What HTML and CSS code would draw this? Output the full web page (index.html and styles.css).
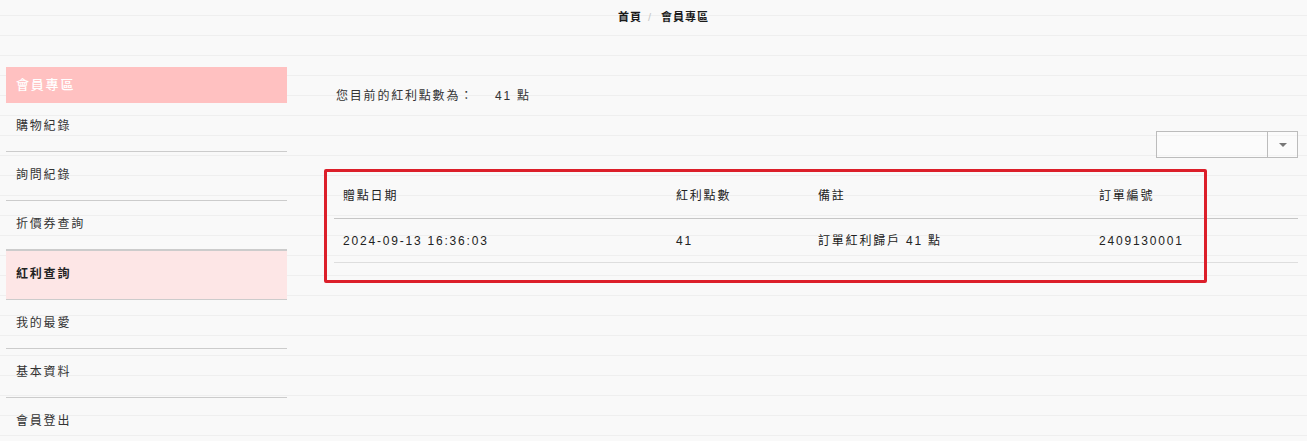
FILE: index.html
```html
<!DOCTYPE html>
<html lang="zh-Hant">
<head>
<meta charset="utf-8">
<title>會員專區 - 紅利查詢</title>
<link rel="stylesheet" href="styles.css">
</head>
<body>
<nav class="breadcrumb">
  <a class="crumb" href="#">首頁</a>
  <span class="sep">/</span>
  <span class="crumb">會員專區</span>
</nav>
<div class="page">
  <aside class="sidebar">
    <div class="side-title">會員專區</div>
    <ul class="side-menu">
      <li class="side-item">購物紀錄</li>
      <li class="side-item">詢問紀錄</li>
      <li class="side-item">折價券查詢</li>
      <li class="side-item active">紅利查詢</li>
      <li class="side-item">我的最愛</li>
      <li class="side-item">基本資料</li>
      <li class="side-item">會員登出</li>
    </ul>
  </aside>
  <main class="main">
    <p class="points">您目前的紅利點數為：<span class="points-value">41 點</span></p>
    <div class="filter-row">
      <div class="select">
        <span class="select-value"></span>
        <span class="select-arrow"><span class="caret"></span></span>
      </div>
    </div>
    <table class="records">
      <thead>
        <tr>
          <th class="col-date">贈點日期</th>
          <th class="col-points">紅利點數</th>
          <th class="col-note">備註</th>
          <th class="col-order">訂單編號</th>
        </tr>
      </thead>
      <tbody>
        <tr>
          <td>2024-09-13 16:36:03</td>
          <td>41</td>
          <td>訂單紅利歸戶 41 點</td>
          <td>2409130001</td>
        </tr>
      </tbody>
    </table>
    <div class="highlight"></div>
  </main>
</div>
</body>
</html>
```

FILE: styles.css
```css
html, body {
  margin: 0;
  padding: 0;
}

body {
  font-family: "Liberation Sans", "Noto Sans CJK TC", sans-serif;
  font-size: 12px;
  color: #333;
  background-color: #f9f9f9;
  background-image: repeating-linear-gradient(
    to bottom,
    transparent 0,
    transparent 19px,
    #efefef 19px,
    #efefef 20px
  );
  background-position: 0 -4px;
  height: 441px;
  overflow: hidden;
}

.breadcrumb {
  display: flex;
  justify-content: center;
  align-items: center;
  height: 18px;
  padding: 8px 0 0 20px;
  font-size: 11px;
  letter-spacing: 1px;
  line-height: 18px;
}

.crumb {
  color: #1a1a1a;
  font-weight: 600;
  text-decoration: none;
}

.sep {
  color: #c8c8c8;
  padding: 0 9px 0 6px;
}

.page {
  display: grid;
  grid-template-columns: 281px 1fr;
  column-gap: 47px;
  padding: 0 9px 0 6px;
  margin-top: 41px;
}

.sidebar {
  display: flex;
  flex-direction: column;
}

.side-title {
  height: 36px;
  line-height: 36px;
  background: #ffc1c1;
  color: #fff;
  font-size: 13px;
  font-weight: 500;
  letter-spacing: 1.8px;
  padding-left: 10px;
}

.side-menu {
  list-style: none;
  margin: 0;
  padding: 0;
}

.side-item {
  height: 48px;
  line-height: 47px;
  border-bottom: 1px solid #cccccc;
  padding-left: 10px;
  letter-spacing: 1.8px;
  color: #333;
}

.side-item.active {
  background: #fde6e6;
  font-weight: 700;
  color: #222;
  border-top: 1px solid #cccccc;
}

.main {
  position: relative;
  display: flex;
  flex-direction: column;
}

.points {
  margin: 19px 0 0;
  padding-left: 2px;
  line-height: 20px;
  letter-spacing: 1.8px;
}

.points-value {
  margin-left: 21px;
}

.filter-row {
  display: flex;
  justify-content: flex-end;
  margin-top: 25px;
}

.select {
  display: flex;
  width: 142px;
  height: 27px;
  box-sizing: border-box;
  border: 1px solid #bcbcbc;
  background: rgba(255, 255, 255, 0.35);
}

.select-value {
  flex: 1;
}

.select-arrow {
  width: 29px;
  border-left: 1px solid #bcbcbc;
  display: flex;
  align-items: center;
  justify-content: center;
}

.caret {
  width: 0;
  height: 0;
  border-left: 4px solid transparent;
  border-right: 4px solid transparent;
  border-top: 4px solid #777;
}

.records {
  width: 100%;
  margin-top: 16px;
  border-collapse: collapse;
  letter-spacing: 1.8px;
}

.records th,
.records td {
  text-align: left;
  padding: 12px 9px;
  line-height: 20px;
  font-weight: 400;
  color: #222;
}

.records th {
  border-bottom: 1px solid #c6c6c6;
}

.records td {
  padding-bottom: 11px;
  border-bottom: 1px solid #dedede;
}

.col-date { width: 315px; }
.col-points { width: 124px; }
.col-note { width: 263px; }

.highlight {
  position: absolute;
  left: -10px;
  top: 102px;
  width: 883px;
  height: 114px;
  box-sizing: border-box;
  border: 3px solid #dc1f2a;
  border-radius: 2px;
  pointer-events: none;
}
```
